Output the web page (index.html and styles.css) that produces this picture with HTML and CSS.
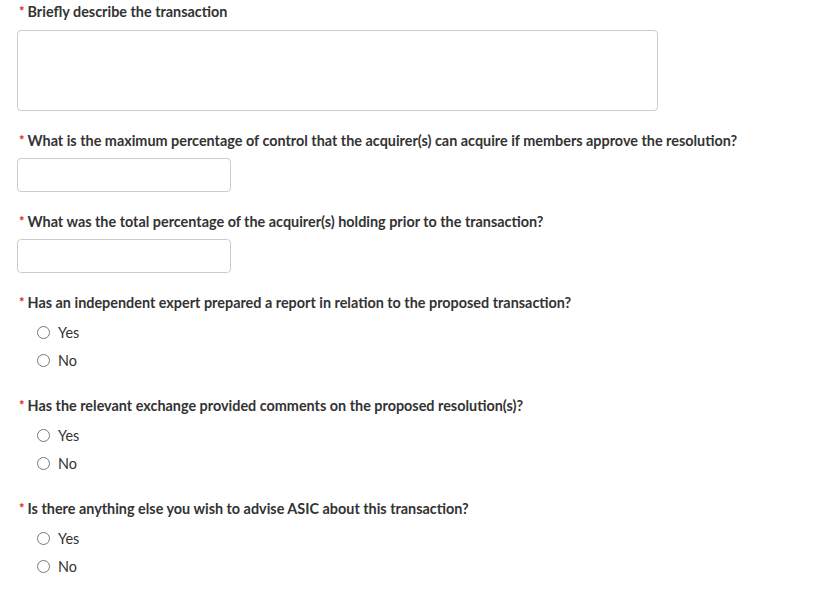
FILE: index.html
```html
<!DOCTYPE html>
<html lang="en">
<head>
    <meta charset="UTF-8">
    <meta name="viewport" content="width=device-width, initial-scale=1.0">
    <title>Transaction details</title>
    <link rel="stylesheet" href="styles.css">
</head>
<body>
    <form class="form">
        <div class="field">
            <label class="question"><span class="req">*</span>Briefly describe the transaction</label>
            <textarea class="textarea"></textarea>
        </div>

        <div class="field input-field">
            <label class="question"><span class="req">*</span>What is the maximum percentage of control that the acquirer(s) can acquire if members approve the resolution?</label>
            <input type="text" class="input">
        </div>

        <div class="field input-field">
            <label class="question"><span class="req">*</span>What was the total percentage of the acquirer(s) holding prior to the transaction?</label>
            <input type="text" class="input">
        </div>

        <div class="field radio-field">
            <div class="question"><span class="req">*</span>Has an independent expert prepared a report in relation to the proposed transaction?</div>
            <label class="option"><input type="radio" name="expert"><span class="dot"></span>Yes</label>
            <label class="option"><input type="radio" name="expert"><span class="dot"></span>No</label>
        </div>

        <div class="field radio-field">
            <div class="question"><span class="req">*</span>Has the relevant exchange provided comments on the proposed resolution(s)?</div>
            <label class="option"><input type="radio" name="exchange"><span class="dot"></span>Yes</label>
            <label class="option"><input type="radio" name="exchange"><span class="dot"></span>No</label>
        </div>

        <div class="field radio-field">
            <div class="question"><span class="req">*</span>Is there anything else you wish to advise ASIC about this transaction?</div>
            <label class="option"><input type="radio" name="other"><span class="dot"></span>Yes</label>
            <label class="option"><input type="radio" name="other"><span class="dot"></span>No</label>
        </div>
    </form>
</body>
</html>
```

FILE: styles.css
```css
/* General */
body {
    margin: 0;
    background: #fff;
    color: #333;
    font-family: Lato, "Open Sans", sans-serif;
    font-size: 14px;
}

.form {
    padding: 2px 0 0 17px;
}

/* Fields */
.field {
    display: flex;
    flex-direction: column;
    align-items: flex-start;
    margin-bottom: 20px;
}

.radio-field {
    margin-bottom: 21.5px;
}

.question {
    display: block;
    height: 20px;
    font-size: 14.4px;
    font-weight: bold;
    line-height: 20px;
    margin-bottom: 8px;
}

.input-field .question {
    margin-bottom: 7px;
}

.radio-field .question {
    margin-bottom: 5.5px;
}

.req {
    color: #e02020;
    font-size: 13px;
    line-height: 1;
    vertical-align: top;
    position: relative;
    top: 3px;
    margin: 0 3px 0 2px;
}

.textarea,
.input {
    box-sizing: border-box;
    border: 1px solid #ccc;
    border-radius: 4px;
    background: #fff;
    font: inherit;
    margin: 0;
}

.textarea {
    width: 641px;
    height: 81px;
    resize: none;
}

.input {
    width: 214px;
    height: 34px;
}

/* Radio options */
.option {
    display: flex;
    align-items: center;
    height: 28px;
    padding-left: 20px;
    font-size: 14.4px;
    cursor: pointer;
}

.option input {
    display: none;
}

.dot {
    box-sizing: border-box;
    width: 13px;
    height: 13px;
    border: 1px solid #777;
    border-radius: 50%;
    margin-right: 8px;
}
```
